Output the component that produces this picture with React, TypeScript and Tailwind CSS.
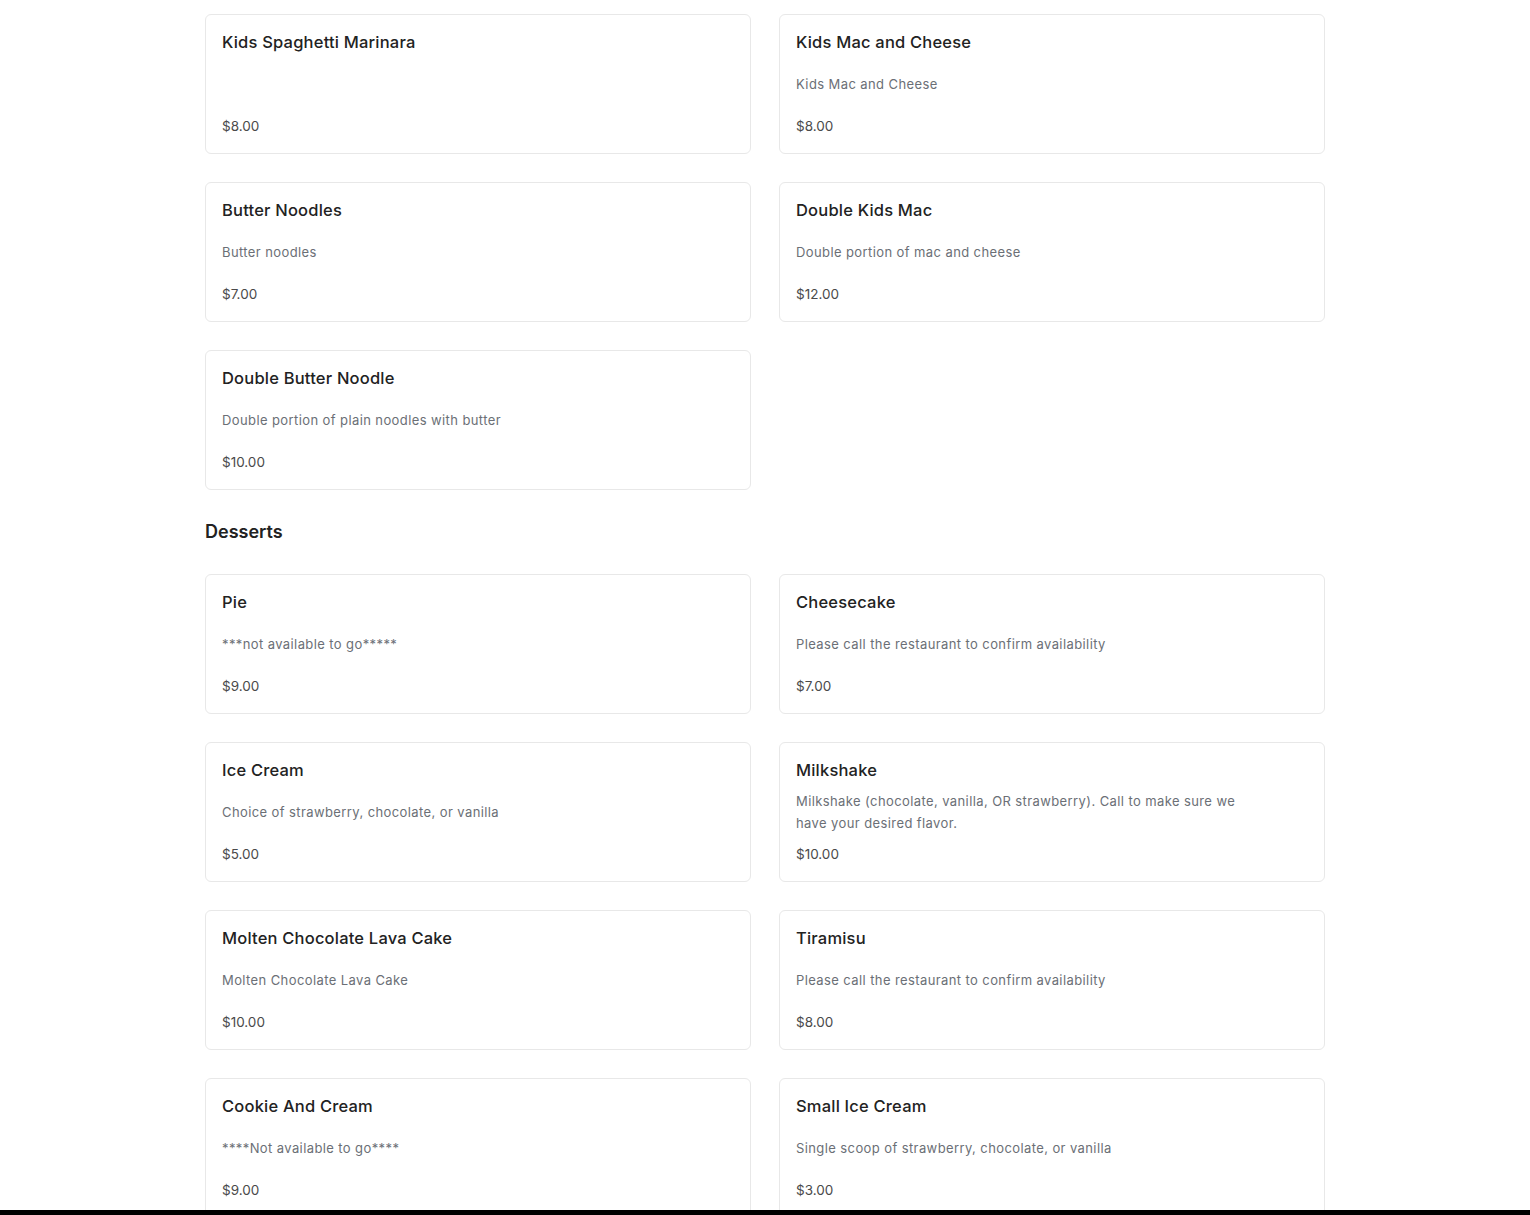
import React from "react";

interface MenuItem {
  name: string;
  description: string;
  price: string;
}

interface Section {
  title?: string;
  items: MenuItem[];
}

const sections: Section[] = [
  {
    items: [
      { name: "Kids Spaghetti Marinara", description: "", price: "$8.00" },
      { name: "Kids Mac and Cheese", description: "Kids Mac and Cheese", price: "$8.00" },
      { name: "Butter Noodles", description: "Butter noodles", price: "$7.00" },
      { name: "Double Kids Mac", description: "Double portion of mac and cheese", price: "$12.00" },
      {
        name: "Double Butter Noodle",
        description: "Double portion of plain noodles with butter",
        price: "$10.00",
      },
    ],
  },
  {
    title: "Desserts",
    items: [
      { name: "Pie", description: "***not available to go*****", price: "$9.00" },
      {
        name: "Cheesecake",
        description: "Please call the restaurant to confirm availability",
        price: "$7.00",
      },
      {
        name: "Ice Cream",
        description: "Choice of strawberry, chocolate, or vanilla",
        price: "$5.00",
      },
      {
        name: "Milkshake",
        description:
          "Milkshake (chocolate, vanilla, OR strawberry). Call to make sure we have your desired flavor.",
        price: "$10.00",
      },
      {
        name: "Molten Chocolate Lava Cake",
        description: "Molten Chocolate Lava Cake",
        price: "$10.00",
      },
      {
        name: "Tiramisu",
        description: "Please call the restaurant to confirm availability",
        price: "$8.00",
      },
      { name: "Cookie And Cream", description: "****Not available to go****", price: "$9.00" },
      {
        name: "Small Ice Cream",
        description: "Single scoop of strawberry, chocolate, or vanilla",
        price: "$3.00",
      },
    ],
  },
];

const MenuCard = ({ item }: { item: MenuItem }) => (
  <div className="h-[140px] flex flex-col justify-between px-4 pt-[15px] pb-[15px] bg-white border border-[#e8e8e8] rounded-md">
    <h3 className="text-[16.5px] leading-6 font-medium text-[#222] tracking-[0.2px]">{item.name}</h3>
    <p className="max-w-[450px] text-[13px] leading-[22px] text-[#6b6f76] tracking-[0.4px] min-h-[22px]">
      {item.description}
    </p>
    <span className="text-[13.5px] leading-6 text-[#4a4a4a]">{item.price}</span>
  </div>
);

export default function App() {
  return (
    <div className="min-h-screen bg-white font-['Inter',sans-serif]">
      <div className="max-w-[1120px] mx-auto pt-[14px] pb-10">
        {sections.map((section, i) => (
          <section key={i}>
            {section.title && (
              <h2 className="mt-7 mb-7 text-[18px] leading-7 font-semibold text-[#222]">
                {section.title}
              </h2>
            )}
            <div className="grid grid-cols-2 gap-7">
              {section.items.map((item) => (
                <MenuCard key={item.name} item={item} />
              ))}
            </div>
          </section>
        ))}
      </div>
      <div className="fixed bottom-0 left-0 right-0 h-[5px] bg-black" />
    </div>
  );
}
